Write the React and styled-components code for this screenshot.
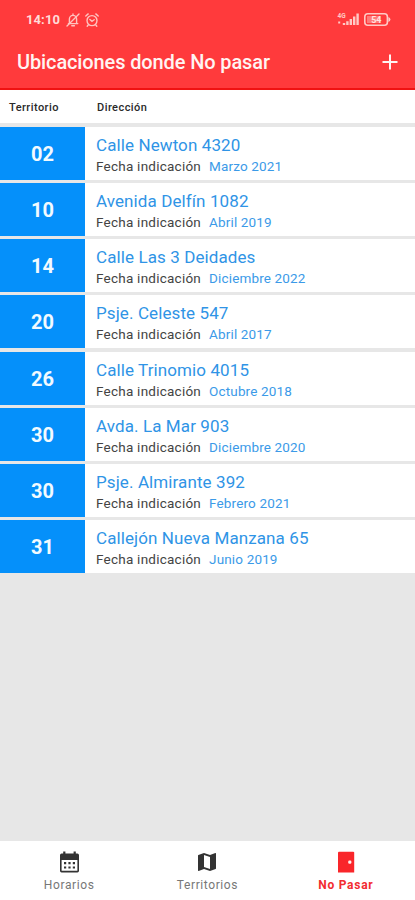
import styled, { createGlobalStyle } from 'styled-components'

const GlobalStyle = createGlobalStyle`
    body {
        margin: 0;
        font-family: Roboto, 'Liberation Sans', sans-serif;
    }
    * {
        box-sizing: border-box;
    }
`
const Screen = styled.div`
    display: flex;
    flex-direction: column;
    width: 415px;
    height: 900px;
    overflow: hidden;
    background: #E7E7E7;
`
const Header = styled.header`
    height: 90px;
    flex-shrink: 0;
    background: #FF3A3C;
    border-bottom: 2px solid #F01212;
    color: #FFF4F2;
`
const StatusBar = styled.div`
    display: flex;
    align-items: center;
    height: 39px;
    padding: 0 24px 0 26px;
`
const Clock = styled.span`
    width: 39px;
    font-size: 13px;
    font-weight: 700;
    letter-spacing: 0.1px;
    color: #FFDCD8;
`
const StatusIcon = styled.svg`
    display: block;
    width: ${props => props.$w}px;
    height: ${props => props.$h}px;
    margin-left: ${props => props.$left || 0}px;
    overflow: visible;
`
const Spacer = styled.div`
    flex: 1;
`
const TitleBar = styled.div`
    display: flex;
    align-items: center;
    justify-content: space-between;
    height: 45px;
    padding: 0 17px;
`
const Title = styled.h1`
    margin: 0;
    font-size: 20px;
    font-weight: 500;
    line-height: 24px;
    white-space: nowrap;
    letter-spacing: -0.12px;
`
const TableHead = styled.div`
    display: flex;
    align-items: center;
    flex-shrink: 0;
    height: 33px;
    padding-top: 1px;
    margin-bottom: 4px;
    background: #FFFFFF;
    color: #2A2A2A;
    font-size: 11px;
    font-weight: 500;
    letter-spacing: 0.45px;
`
const HeadCell = styled.span`
    width: ${props => props.$width}px;
    padding-left: ${props => props.$left}px;
`
const List = styled.div`
    display: flex;
    flex-direction: column;
    gap: 3.14px;
    flex: 1;
`
const Row = styled.div`
    display: flex;
    height: 53px;
    background: #FFFFFF;
`
const Territory = styled.div`
    display: flex;
    align-items: center;
    justify-content: center;
    width: 85px;
    padding-top: 1px;
    background: #0590FA;
    color: #F2FAFF;
    font-size: 20px;
    font-weight: 700;
`
const Info = styled.div`
    padding: 8px 0 0 11px;
    white-space: nowrap;
`
const Address = styled.div`
    color: #2F94E6;
    font-size: 17px;
    line-height: 21px;
    letter-spacing: 0.1px;
`
const DateLine = styled.div`
    display: flex;
    gap: 8px;
    color: #444444;
    font-size: 13.5px;
    line-height: 21px;
    letter-spacing: 0.24px;
`
const DateValue = styled.span`
    color: #3B9AE8;
    letter-spacing: 0.15px;
`
const TabBar = styled.nav`
    display: flex;
    flex-shrink: 0;
    height: 59px;
    background: #FFFFFF;
`
const Tab = styled.div`
    display: flex;
    flex-direction: column;
    align-items: center;
    flex: 1;
    padding-top: 9px;
    color: ${props => (props.$active ? '#F22C30' : '#777777')};
    font-size: 12px;
    font-weight: ${props => (props.$active ? 700 : 400)};
    line-height: 16px;
    letter-spacing: ${props => (props.$active ? 0.75 : 0.6)}px;
`
const TabIcon = styled.svg`
    display: block;
    width: 24px;
    height: 24px;
    margin-bottom: 3px;
    color: ${props => (props.$active ? '#F9262A' : '#333333')};
`

const rows = [
    { number: '02', address: 'Calle Newton 4320', date: 'Marzo 2021' },
    { number: '10', address: 'Avenida Delfín 1082', date: 'Abril 2019' },
    { number: '14', address: 'Calle Las 3 Deidades', date: 'Diciembre 2022' },
    { number: '20', address: 'Psje. Celeste 547', date: 'Abril 2017' },
    { number: '26', address: 'Calle Trinomio 4015', date: 'Octubre 2018' },
    { number: '30', address: 'Avda. La Mar 903', date: 'Diciembre 2020' },
    { number: '30', address: 'Psje. Almirante 392', date: 'Febrero 2021' },
    { number: '31', address: 'Callejón Nueva Manzana 65', date: 'Junio 2019' },
]

const MutedBell = () => (
    <StatusIcon $w={14} $h={14} $left={1} viewBox="0 0 14 14" fill="none" stroke="#FFC4C0" strokeWidth="1.4" strokeLinecap="round">
        <path d="M2.4 10.6h9.4M3.4 10.4V6a3.6 3.6 0 0 1 7.2 0v4.4M5.8 12.7h2.6M7 1v1.2" />
        <path d="M1 13 13 1" />
    </StatusIcon>
)

const Alarm = () => (
    <StatusIcon $w={14} $h={14} $left={5} viewBox="0 0 14 14" fill="none" stroke="#FFC4C0" strokeWidth="1.4" strokeLinecap="round">
        <circle cx="7" cy="7.6" r="5" />
        <path d="M.8 3 3.2.9M13.2 3 10.8.9M4.9 6.4 7 8.3l2.2-1.6M3.2 12l-1 1.2M10.8 12l1 1.2" />
    </StatusIcon>
)

const Signal = () => (
    <StatusIcon $w={22} $h={13} viewBox="0 0 22 13" fill="#FFC9C5">
        <text x="-0.5" y="5" fontSize="6.5" fontWeight="700">4G</text>
        <path d="M.2 8.4h2v2h-2zM4.8 10h2.4v2H4.8zM8.2 8.2h2.4V12H8.2zM11.6 6h2.4v6h-2.4zM15 3.4h2.4V12H15zM18.4.6h2.4V12h-2.4z" />
    </StatusIcon>
)

const Battery = () => (
    <StatusIcon $w={27} $h={13} $left={4} viewBox="0 0 27 13">
        <rect x=".8" y=".8" width="22.6" height="11.4" rx="3" fill="none" stroke="#FFC9C5" strokeWidth="1.6" />
        <path d="M3 3h13.5v7H3z" fill="#FFC9C5" opacity=".45" />
        <path d="M24.4 4q2 .7 2 2.5t-2 2.5z" fill="#FFC9C5" />
        <text x="12.3" y="9.8" fontSize="9" fontWeight="700" textAnchor="middle" fill="#FFE4E1">54</text>
    </StatusIcon>
)

const Plus = () => (
    <StatusIcon $w={16} $h={16} viewBox="0 0 16 16" fill="none" stroke="#FFF4F2" strokeWidth="2">
        <path d="M8 .5v15M.5 8h15" />
    </StatusIcon>
)

const CalendarIcon = () => (
    <TabIcon viewBox="0 0 24 24" fill="currentColor">
        <path d="M4.6 3.6h1.6V1.6h2.2v2h8.2v-2h2.2v2h1.6q1.6 0 1.6 1.6v15.6q0 1.6-1.6 1.6H4.6Q3 22.4 3 20.8V5.2q0-1.6 1.6-1.6zM4.6 10v10.8h15.8V10z" fillRule="evenodd" />
        <path d="M7 12h2.2v2.2H7zM11.4 12h2.2v2.2h-2.2zM15.8 12H18v2.2h-2.2zM7 16.4h2.2v2.2H7zM11.4 16.4h2.2v2.2h-2.2zM15.8 16.4H18v2.2h-2.2z" />
    </TabIcon>
)

const MapIcon = () => (
    <TabIcon viewBox="0 0 24 24" fill="currentColor">
        <path d="M20.5 3l-.16.03L15 5.1 9 3 3.36 4.9c-.21.07-.36.25-.36.48V20.5c0 .28.22.5.5.5l.16-.03L9 18.9l6 2.1 5.64-1.9c.21-.07.36-.25.36-.48V3.5c0-.28-.22-.5-.5-.5zM15 19l-6-2.11V5l6 2.11V19z" />
    </TabIcon>
)

const DoorIcon = () => (
    <TabIcon $active viewBox="0 0 24 24" fill="currentColor">
        <path d="M5 1.8h14.2q1 0 1 1V22.4H4V2.8q0-1 1-1z" />
        <rect x="14.2" y="10.6" width="3.2" height="3.2" rx="1.2" fill="#FFF0EE" />
    </TabIcon>
)

export default function App() {
    return (
        <>
            <GlobalStyle />
            <Screen>
                <Header>
                    <StatusBar>
                        <Clock>14:10</Clock>
                        <MutedBell />
                        <Alarm />
                        <Spacer />
                        <Signal />
                        <Battery />
                    </StatusBar>
                    <TitleBar>
                        <Title>Ubicaciones donde No pasar</Title>
                        <Plus />
                    </TitleBar>
                </Header>
                <TableHead>
                    <HeadCell $width={85} $left={9}>Territorio</HeadCell>
                    <HeadCell $width={330} $left={12}>Dirección</HeadCell>
                </TableHead>
                <List>
                    {rows.map((row, i) => (
                        <Row key={i}>
                            <Territory>{row.number}</Territory>
                            <Info>
                                <Address>{row.address}</Address>
                                <DateLine>
                                    Fecha indicación
                                    <DateValue>{row.date}</DateValue>
                                </DateLine>
                            </Info>
                        </Row>
                    ))}
                </List>
                <TabBar>
                    <Tab>
                        <CalendarIcon />
                        Horarios
                    </Tab>
                    <Tab>
                        <MapIcon />
                        Territorios
                    </Tab>
                    <Tab $active>
                        <DoorIcon />
                        No Pasar
                    </Tab>
                </TabBar>
            </Screen>
        </>
    )
}
